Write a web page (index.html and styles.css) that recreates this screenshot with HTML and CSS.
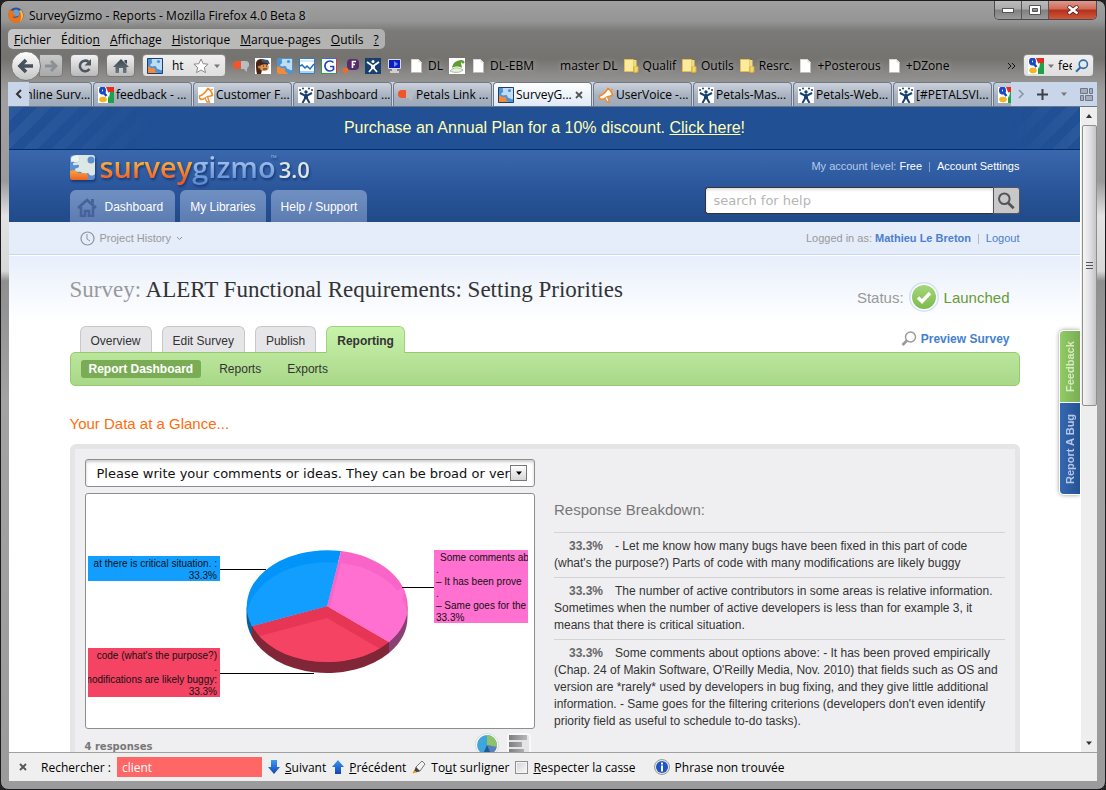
FILE: index.html
```html
<!DOCTYPE html>
<html lang="fr">
<head>
    <meta charset="utf-8">
    <title>SurveyGizmo - Reports</title>
    <link rel="stylesheet" href="styles.css">
</head>
<body>

<!-- Shared icons -->
<svg class="defs" width="0" height="0" aria-hidden="true">
    <defs>
        <linearGradient id="steel" x1="0" y1="0" x2="0" y2="1"><stop offset="0" stop-color="#3c4650"/><stop offset="1" stop-color="#6d7780"/></linearGradient>
        <linearGradient id="arrowBlue" x1="0" y1="0" x2="0" y2="1"><stop offset="0" stop-color="#3a9cf5"/><stop offset="1" stop-color="#1543b5"/></linearGradient>
        <linearGradient id="greenBall" x1="0" y1="0" x2="0" y2="1"><stop offset="0" stop-color="#a5d67a"/><stop offset="1" stop-color="#7cbb4c"/></linearGradient>
        <linearGradient id="orangeFill" x1="0" y1="0" x2="0" y2="1"><stop offset="0" stop-color="#fba33c"/><stop offset="1" stop-color="#ef6224"/></linearGradient>
        <linearGradient id="bars"><stop offset="0" stop-color="#7e7e80"/><stop offset="1" stop-color="#b8b8ba"/></linearGradient>
    </defs>
    <symbol id="i-page" viewBox="0 0 16 16">
        <path d="M2.5 1.5h7l3 3v10h-10z" fill="#fff" stroke="#d8d8d8"/>
        <path d="M9.500 1.500v3h3z" fill="#ddd"/>
        <path d="M12.500 5v9.500h-10" fill="none" stroke="#bbb"/>
    </symbol>
    <symbol id="i-folder" viewBox="0 0 16 16">
        <path d="M.5 1.500h9v12h-9z" fill="#fbeaa0" stroke="#e3bf4a"/>
        <path d="M10 8.500h4v5.500l-4 .5z" fill="#f2d873" stroke="#d4ae3b"/>
        <path d="M9.500 2h3v6.500h-3z" fill="#f3dc80"/>
    </symbol>
    <symbol id="i-google" viewBox="0 0 16 16">
        <path d="M0 0h16v16H0z" fill="#fff"/>
        <path d="M8 0h8v5H10z" fill="#e52c1f"/>
        <path d="M10 5h6v11h-6z" fill="#1fa04b"/>
        <path d="M0 6l6 1 2 5-3 4H0z" fill="#fff"/>
        <ellipse cx="4.500" cy="3.500" rx="2" ry="2.500" fill="#fff" stroke="#1b49c4" stroke-width="3"/>
        <path d="M6 6l2.500 3" stroke="#1b49c4" stroke-width="2.500"/>
        <ellipse cx="5" cy="12.500" rx="3.400" ry="2.400" fill="#f6b51b" stroke="#f6b51b"/>
        <path d="M9 6l2 5 1-6z" fill="#fff"/>
    </symbol>
    <symbol id="i-puzzle" viewBox="0 0 16 16">
        <rect width="16" height="16" rx="2" fill="#4f94d2"/>
        <path d="M5 1h10v11c-2 1-2-1-4-1s-1-3-3-3-2 1-4 0 0-2 1-3-1-2 0-4z" fill="#bfdcf3"/>
        <circle cx="11.500" cy="3.500" r="1.600" fill="#4f94d2"/>
        <path d="M0 9c2-1 3 0 4 1s3-1 4 1-1 2 1 3 2 2 2 2H2a2 2 0 0 1-2-2z" fill="#f5893a"/>
    </symbol>
    <symbol id="i-jira" viewBox="0 0 16 16">
        <rect width="16" height="16" fill="#fff"/>
        <g fill="#17406f">
            <circle cx="8" cy="5" r="1.700"/><circle cx="2" cy="3" r="1"/><circle cx="5" cy="1.500" r="1"/><circle cx="11" cy="1.500" r="1"/><circle cx="14" cy="3" r="1"/>
        </g>
        <path d="M2 6l5 2.500v3L4.500 16M14 6L9 8.500v3l2.500 4.500M8 7v5" fill="none" stroke="#17406f" stroke-width="2"/>
    </symbol>
    <symbol id="i-bubbles" viewBox="0 0 16 16">
        <path d="M8 3h4.500a3.500 3.500 0 0 1 2 6.500L13.500 14 11 11H8z" fill="#b9bcc2"/>
        <path d="M8 3v8H4a4 4 0 0 1 0-8z" fill="#f0562a"/>
    </symbol>
    <symbol id="i-horn" viewBox="0 0 16 16">
        <path d="M1.500 9C4 8.500 7 6 10 1.500c2 1 4 4 4.500 7C11 9 8 10 5.500 12 3 13 1 12 1.500 9z" fill="#fff" stroke="#f08a2c" stroke-width="1.600"/>
        <path d="M7 11l2 4h2.500L9.500 10" fill="#fff" stroke="#f08a2c" stroke-width="1.300"/>
        <path d="M13 3l2-1" stroke="#f08a2c"/>
    </symbol>
    <symbol id="i-lens" viewBox="0 0 16 16">
        <circle cx="6.500" cy="6" r="4.700" fill="none" stroke="currentColor" stroke-width="1.800"/>
        <path d="M9.800 9.500l5 5" stroke="currentColor" stroke-width="2.400"/>
    </symbol>
    <symbol id="i-caret" viewBox="0 0 8 8"><path d="M1 2.500h6L4 6z" fill="currentColor"/></symbol>
</svg>

<div class="window">

    <div class="title-bar">
        <svg class="fox" viewBox="0 0 16 16">
            <circle cx="8" cy="8" r="7.500" fill="#2b4f9c"/>
            <circle cx="8" cy="6" r="3.500" fill="#5ea2df"/>
            <path d="M1 2c1 1 2 1.500 3 1.500 1 .5 2 .5 3 1-1 1-2 1-2 2 1 1 2 1 3 2-1 2-3 1-4 1 2 2 6 1.500 7-1 1-2 0-4-1-5 3 1 5 3 5.500 5C15 13 11.500 16 8 16 3 16 0 12 .3 7.500z" fill="#e8731c"/>
            <path d="M13 3c3 3 2.500 9-1 11.500C14 10 13.500 6 11 4z" fill="#f9c02f"/>
        </svg>
        <span class="window-title">SurveyGizmo - Reports - Mozilla Firefox 4.0 Beta 8</span>
        <div class="window-buttons">
            <button class="wb-min" aria-label="Réduire"><svg width="14" height="8" viewBox="0 0 14 8"><rect x="1.500" y="2.500" width="11" height="4" fill="#fff" stroke="#555"/></svg></button>
            <button class="wb-max" aria-label="Agrandir"><svg width="12" height="10" viewBox="0 0 12 10"><path d="M.5.5h11v9H.5z M3.500 3.500h5v3h-5z" fill="#fff" fill-rule="evenodd" stroke="#555"/></svg></button>
            <button class="wb-close" aria-label="Fermer"><svg width="12" height="10" viewBox="0 0 12 10"><path d="M1 1l10 8M11 1L1 9" stroke="#60221c" stroke-width="4"/><path d="M1.500 1.500l9 7M10.500 1.500l-9 7" stroke="#fff" stroke-width="2.400"/></svg></button>
        </div>
    </div>

    <nav class="menu-bar">
        <button><u>F</u>ichier</button>
        <button>Éditio<u>n</u></button>
        <button><u>A</u>ffichage</button>
        <button><u>H</u>istorique</button>
        <button><u>M</u>arque-pages</button>
        <button><u>O</u>utils</button>
        <button><u>?</u></button>
    </nav>

    <div class="nav-bar">
        <div class="back-forward">
            <button class="back" aria-label="Précédent"><svg width="18" height="16" viewBox="0 0 18 16"><path d="M9 2L3 8l6 6M3 8h13" fill="none" stroke="#47515b" stroke-width="3.600"/></svg></button>
            <button class="forward" aria-label="Suivant"><svg width="14" height="14" viewBox="0 0 14 14"><path d="M7 2l5 5-5 5M12 7H1" fill="none" stroke="#8b9096" stroke-width="3"/></svg></button>
        </div>
        <button class="tool" aria-label="Actualiser"><svg width="16" height="16" viewBox="0 0 16 16"><path d="M12.500 11A5.300 5.300 0 1 1 11.500 3.800" fill="none" stroke="#4d5761" stroke-width="2.600"/><path d="M14 1v6.500H7.500z" fill="#4d5761"/></svg></button>
        <button class="tool" aria-label="Accueil"><svg width="18" height="16" viewBox="0 0 18 16"><path d="M9 1L1 9h2.500v6H7v-5h4v5h3.500V9H17z" fill="url(#steel)"/><path d="M12.500 2H15v4l-2.500-2z" fill="#3c4650"/></svg></button>
        <div class="url-box">
            <svg class="fav" viewBox="0 0 16 16"><use href="#i-puzzle"/><path d="M.5.5h15v15H.5z" fill="none" stroke="#1d3f6b"/></svg>
            <input type="text" value="ht" aria-label="Adresse">
            <svg width="16" height="16" viewBox="0 0 16 16"><path d="M8 1l2.100 4.700 5 .5-3.800 3.400 1.200 5L8 12l-4.500 2.600 1.200-5L.9 6.200l5-.5z" fill="#fff" stroke="#8a8a8a"/></svg>
            <svg class="caret" viewBox="0 0 8 8"><use href="#i-caret"/></svg>
        </div>
        <div class="bookmarks">
            <a href="#" aria-label="Petals"><svg viewBox="0 0 16 16"><use href="#i-bubbles"/></svg></a>
            <a href="#" aria-label="MailChimp"><svg viewBox="0 0 16 16"><rect width="16" height="16" fill="#fff"/><path d="M1 6c0-4 3-5 6-5l7 3-1 3-5 1-2 8H2c-1-3-1-7-1-10z" fill="#4a2412"/><path d="M6 7c3-1 5-1 7 0 2 3 0 6-4 6s-5-3-3-6z" fill="#dc9658"/><path d="M6 1l7 1 2 4-8-2z" fill="#38597f"/><circle cx="4.500" cy="9" r="1.600" fill="#c6844c"/><path d="M8 8h1M11 8h1M8 11h4" stroke="#3a2014"/></svg></a>
            <a href="#" aria-label="SurveyGizmo"><svg viewBox="0 0 16 16"><use href="#i-puzzle"/></svg></a>
            <a href="#" aria-label="Statistiques"><svg viewBox="0 0 16 16"><path d="M.5.5h15v15H.5z" fill="#fff" stroke="#2f7fc4"/><path d="M1 3h14" stroke="#a9d3f0"/><path d="M1 14h14" stroke="#a9d3f0" stroke-width="2"/><path d="M1 8l2-1 3 3 2-2 3 3 4-5" fill="none" stroke="#1e6fb8" stroke-width="1.500"/></svg></a>
            <a href="#" aria-label="Google"><svg viewBox="0 0 16 16"><rect width="16" height="16" fill="#fff"/><path d="M0 0h16v1H0z" fill="#3a6be0"/><path d="M15 0h1v16h-1z" fill="#d33"/><path d="M0 15h16v1H0z" fill="#2da14a"/><path d="M0 0h1v16H0z" fill="#2da14a"/><path d="M12.500 4.500A5 5 0 1 0 12.500 11.500V8.500H9" fill="none" stroke="#2344b8" stroke-width="1.700"/></svg></a>
            <a href="#" aria-label="Flux"><svg viewBox="0 0 16 16"><rect x="4" y="1" width="12" height="11" rx="4" fill="#5b2a6e"/><path d="M13 3.500H9.500V10M9 6.500h3" fill="none" stroke="#fff" stroke-width="1.600"/><path d="M0 10h5v3l-2 3-3-2z" fill="#ef6b2c"/></svg></a>
            <a href="#" aria-label="Jira"><svg viewBox="0 0 16 16"><rect width="16" height="16" fill="#17406f"/><path d="M2 4l5 3.500v3L4 14M14 4L9 7.500v3l3 3.500M8 7v4" fill="none" stroke="#fff" stroke-width="1.800"/><circle cx="8" cy="3.500" r="1.500" fill="#fff"/></svg></a>
            <a href="#" aria-label="Bureau"><svg viewBox="0 0 16 16"><path d="M1.500 1.500h12v9h-12z" fill="#0b1fc4" stroke="#dcdcdc"/><path d="M7 3l4 3-4 3z" fill="#6f8dff"/><path d="M5 11h5v2H5zM3 13h9v2H3z" fill="#d0d0d0"/></svg></a>
            <a href="#"><svg viewBox="0 0 16 16"><use href="#i-page"/></svg>DL</a>
            <a href="#" aria-label="Lutin"><svg viewBox="0 0 16 16"><rect width="16" height="16" fill="#fff"/><path d="M3 10C4 4 8 2 14 2l-2 3 1 5c-3-2-7-2-10 0z" fill="#5f9c33"/><path d="M1 13c4-4 8-4 13-1-3 3-9 3-13 1z" fill="#e8efe2" stroke="#a8bf98"/><circle cx="14" cy="4" r="1.500" fill="#5f9c33"/></svg></a>
            <a href="#"><svg viewBox="0 0 16 16"><use href="#i-page"/></svg>DL-EBM</a>
            <a href="#" class="no-icon">master DL</a>
            <a href="#"><svg viewBox="0 0 16 16"><use href="#i-folder"/></svg>Qualif</a>
            <a href="#"><svg viewBox="0 0 16 16"><use href="#i-folder"/></svg>Outils</a>
            <a href="#"><svg viewBox="0 0 16 16"><use href="#i-folder"/></svg>Resrc.</a>
            <a href="#"><svg viewBox="0 0 16 16"><use href="#i-page"/></svg>+Posterous</a>
            <a href="#"><svg viewBox="0 0 16 16"><use href="#i-page"/></svg>+DZone</a>
        </div>
        <button class="overflow" aria-label="Plus de marque-pages"><svg width="9" height="8" viewBox="0 0 9 8"><path d="M1 1l3 3-3 3M5 1l3 3-3 3" fill="none" stroke="#111"/></svg></button>
        <div class="search-box">
            <svg class="fav" viewBox="0 0 16 16"><use href="#i-google"/></svg>
            <svg class="caret" viewBox="0 0 8 8"><use href="#i-caret"/></svg>
            <input type="text" value="fee" aria-label="Recherche">
            <svg class="lens" viewBox="0 0 16 16"><use href="#i-lens"/></svg>
        </div>
    </div>

    <div class="tab-bar">
        <button class="tab-scroll" aria-label="Onglets précédents"><svg width="7" height="10" viewBox="0 0 7 10"><path d="M6 1L2 5l4 4" fill="none" stroke="#333" stroke-width="2"/></svg></button>
        <div class="tabs">
            <button class="tab"><i class="fav"></i><span>Online Surv...</span></button>
            <button class="tab"><svg class="fav" viewBox="0 0 16 16"><use href="#i-google"/></svg><span>feedback - ...</span></button>
            <button class="tab"><svg class="fav white" viewBox="0 0 16 16"><use href="#i-horn"/></svg><span>Customer F...</span></button>
            <button class="tab"><svg class="fav" viewBox="0 0 16 16"><use href="#i-jira"/></svg><span>Dashboard ...</span></button>
            <button class="tab"><svg class="fav" viewBox="0 0 16 16"><use href="#i-bubbles"/></svg><span>Petals Link ...</span></button>
            <button class="tab active"><svg class="fav" viewBox="0 0 16 16"><use href="#i-puzzle"/><path d="M.5.5h15v15H.5z" fill="none" stroke="#1d3f6b"/></svg><span>SurveyG...</span><svg class="close" viewBox="0 0 8 8"><path d="M1 1l6 6M7 1L1 7" stroke="#555" stroke-width="1.800"/></svg></button>
            <button class="tab"><svg class="fav" viewBox="0 0 16 16"><use href="#i-horn"/></svg><span>UserVoice -...</span></button>
            <button class="tab"><svg class="fav" viewBox="0 0 16 16"><use href="#i-jira"/></svg><span>Petals-Mas...</span></button>
            <button class="tab"><svg class="fav" viewBox="0 0 16 16"><use href="#i-jira"/></svg><span>Petals-Web...</span></button>
            <button class="tab"><svg class="fav" viewBox="0 0 16 16"><use href="#i-jira"/></svg><span>[#PETALSVI...</span></button>
            <button class="tab" aria-label="Google"><svg class="fav" viewBox="0 0 16 16"><use href="#i-google"/></svg></button>
        </div>
        <div class="tab-tools">
            <button aria-label="Onglets suivants"><svg width="7" height="10" viewBox="0 0 7 10"><path d="M1 1l4 4-4 4" fill="none" stroke="#8a93a3" stroke-width="1.600"/></svg></button>
            <button aria-label="Nouvel onglet"><svg width="11" height="11" viewBox="0 0 11 11"><path d="M5.500 0v11M0 5.500h11" stroke="#3c4048" stroke-width="2"/></svg></button>
            <button aria-label="Liste des onglets"><svg class="caret" viewBox="0 0 8 8"><use href="#i-caret"/></svg></button>
            <button aria-label="Groupes d'onglets"><svg width="13" height="13" viewBox="0 0 13 13"><path d="M.5.5h7v5h-7zM9.500.5h3v5h-3zM.5 7.500h3v5h-3zM5.500 7.500h7v5h-7z" fill="#a5adbb" stroke="#6e7786"/></svg></button>
        </div>
    </div>

    <div class="viewport">
        <div class="page">
            <div class="promo">Purchase an Annual Plan for a 10% discount. <a href="#">Click here</a>!</div>

            <header class="site-header">
                <div class="wrap header-inner">
                    <div class="brand">
                        <div class="logo">
                            <svg width="26" height="28" viewBox="0 0 26 28">
                                <rect x="0" y="1" width="25" height="25" rx="3" fill="#5f8fd0"/>
                                <path d="M10 1h12a3 3 0 0 1 3 3v16c-2 2-5 2-6 0s-4-1-3 2-2 3-4 1 2-4-1-5-6 1-6-2 4-1 4-4-6 1-6-2 5 0 6-3-1-4 0-6z" fill="#dce8e6"/>
                                <path d="M1 5c0-3 3-4 8-4-1 3 2 5-1 7-3 1-4-1-7 0z" fill="#edf3ef"/>
                                <circle cx="21" cy="6" r="3.500" fill="#5f8fd0"/>
                                <path d="M0 17c4-1 6-1 7 1s4 1 6 1 5 0 5 3-1 4-1 4H3a3 3 0 0 1-3-3z" fill="url(#orangeFill)"/>
                            </svg>
                            <span class="logo-survey">survey</span><span class="logo-gizmo">gizmo</span><sup>™</sup><span class="logo-version">3.0</span>
                        </div>
                        <nav class="site-nav">
                            <a href="#" class="home"><svg width="20" height="19" viewBox="0 0 20 19"><path d="M1 10l9-8 9 8M4 9v9h4v-5h4v5h4V9" fill="none" stroke="#45629a" stroke-width="2.600"/><path d="M14 1h3v5l-3-2z" fill="#45629a"/></svg>Dashboard</a>
                            <a href="#">My Libraries</a>
                            <a href="#">Help / Support</a>
                        </nav>
                    </div>
                    <div class="header-right">
                        <div class="account">My account level: <b>Free</b><i>|</i><a href="#">Account Settings</a></div>
                        <form class="help-search">
                            <input type="text" placeholder="search for help" aria-label="search for help">
                            <button type="button" aria-label="Search"><svg width="18" height="18" viewBox="0 0 16 16"><use href="#i-lens"/></svg></button>
                        </form>
                    </div>
                </div>
            </header>

            <div class="sub-bar">
                <div class="wrap sub-inner">
                    <button class="history">
                        <svg width="15" height="15" viewBox="0 0 15 15"><circle cx="7.500" cy="7.500" r="6.500" fill="none" stroke="#8f949d" stroke-width="1.200"/><path d="M7 3v5l3 2" fill="none" stroke="#8f949d"/></svg>
                        Project History
                        <svg width="7" height="5" viewBox="0 0 7 5"><path d="M1 1l2.500 2.500L6 1" fill="none" stroke="#8f949d"/></svg>
                    </button>
                    <div class="login">Logged in as: <a href="#"><b>Mathieu Le Breton</b></a><i>|</i><a href="#">Logout</a></div>
                </div>
            </div>

            <main class="main">
                <div class="wrap">
                    <div class="title-row">
                        <h1><span>Survey:</span> ALERT Functional Requirements: Setting Priorities</h1>
                        <div class="status">Status:
                            <svg width="32" height="32" viewBox="0 0 32 32"><circle cx="16" cy="16" r="15" fill="#d3e1f8"/><circle cx="16" cy="16" r="13.500" fill="#fff"/><circle cx="16" cy="16" r="12" fill="url(#greenBall)"/><path d="M10 16.500l4 4 8-8.500" fill="none" stroke="#fff" stroke-width="3.400"/></svg>
                            <strong>Launched</strong>
                        </div>
                    </div>

                    <div class="tabs-row">
                        <nav class="survey-tabs">
                            <a href="#">Overview</a>
                            <a href="#">Edit Survey</a>
                            <a href="#">Publish</a>
                            <a href="#" class="current">Reporting</a>
                        </nav>
                        <a href="#" class="preview"><svg width="16" height="16" viewBox="0 0 16 16"><circle cx="9.500" cy="6" r="5" fill="none" stroke="#999" stroke-width="1.400"/><path d="M6 9.500L1.500 14" stroke="#999" stroke-width="2.600"/></svg>Preview Survey</a>
                    </div>
                    <nav class="report-nav">
                        <a href="#" class="current">Report Dashboard</a>
                        <a href="#">Reports</a>
                        <a href="#">Exports</a>
                    </nav>

                    <h2>Your Data at a Glance...</h2>

                    <section class="panel">
                        <div class="chart-col">
                            <div class="question">
                                <select aria-label="Question">
                                    <option>Please write your comments or ideas. They can be broad or very specific.</option>
                                </select>
                                <span class="select-arrow"><svg width="8" height="8" viewBox="0 0 8 8"><use href="#i-caret"/></svg></span>
                            </div>
                            <div class="chart">
                                <svg width="448" height="234" viewBox="0 0 448 234">
                                    <defs>
                                        <path id="blue" d="M241 112L166 132A80.500 56 0 0 1 255 57z"/>
                                        <path id="pink" d="M241 112L255 57A80.500 56 0 0 1 303 148z"/>
                                        <path id="red" d="M241 112L303 148A80.500 56 0 0 1 166 132z"/>
                                        <clipPath id="inBlue"><use href="#blue"/></clipPath>
                                        <clipPath id="inPink"><use href="#pink"/></clipPath>
                                        <clipPath id="inRed"><use href="#red"/></clipPath>
                                        <clipPath id="leftLabels"><rect x="2" y="0" width="132" height="234"/></clipPath>
                                        <clipPath id="rightLabels"><rect x="348" y="0" width="94" height="234"/></clipPath>
                                    </defs>

                                    <!-- Pie sides -->
                                    <path d="M160.500 112v11A80.500 56 0 0 0 166 143V132z" fill="#0b5f93"/>
                                    <path d="M166 132v11A80.500 56 0 0 0 303 159V148z" fill="#802637"/>
                                    <path d="M303 148v11A80.500 56 0 0 0 321.500 123V112z" fill="#8a4073"/>

                                    <!-- Pie top -->
                                    <use href="#blue" fill="#0294f8"/>
                                    <use href="#pink" fill="#f864c8"/>
                                    <use href="#red" fill="#e73556"/>
                                    <g clip-path="url(#inBlue)"><use href="#blue" y="12" fill="#129eff"/><path d="M166 132l75-20v12z" fill="#129eff"/></g>
                                    <g clip-path="url(#inPink)"><use href="#pink" y="12" fill="#ff70d0"/><path d="M244 114l76-20-17 54z" fill="#ff70d0"/></g>
                                    <g clip-path="url(#inRed)"><use href="#red" y="12" fill="#f54364"/></g>

                                    <path d="M134 75.500h46M316 93.500h32M134 179.500h94" stroke="#000"/>

                                    <rect x="2" y="62" width="132" height="25" fill="#129eff"/>
                                    <rect x="2" y="154" width="132" height="49" fill="#f54364"/>
                                    <rect x="348" y="56" width="94" height="73" fill="#ff70d0"/>
                                    <g class="chart-text end" clip-path="url(#leftLabels)">
                                        <text x="131" y="73">at there is critical situation. :</text>
                                        <text x="131" y="85">33.3%</text>
                                        <text x="131" y="165">code (what's the purpose?)</text>
                                        <text x="131" y="177">.</text>
                                        <text x="131" y="189">modifications are likely buggy:</text>
                                        <text x="131" y="201">33.3%</text>
                                    </g>
                                    <g class="chart-text" clip-path="url(#rightLabels)">
                                        <text x="354" y="67">Some comments ab</text>
                                        <text x="350" y="79">.</text>
                                        <text x="350" y="91">– It has been prove</text>
                                        <text x="350" y="103">.</text>
                                        <text x="350" y="115">– Same goes for the</text>
                                        <text x="350" y="127">33.3%</text>
                                    </g>
                                </svg>
                            </div>
                            <div class="chart-foot">
                                <span>4 responses</span>
                                <div class="chart-types">
                                    <button aria-label="Pie chart"><svg width="24" height="24" viewBox="0 0 24 24"><circle cx="12" cy="12" r="11.500" fill="#fff" stroke="#d5d7dc"/><circle cx="12" cy="12" r="10" fill="#41a5dd"/><path d="M12 12V2a10 10 0 0 1 9.700 12z" fill="#8cc269"/><path d="M12 12l9.700 2A10 10 0 0 1 16 21z" fill="#5c7fb8"/><path d="M12 12l4 9a10 10 0 0 1-8 0z" fill="#1c5a9c"/></svg></button>
                                    <button aria-label="Bar chart"><svg width="24" height="24" viewBox="0 0 24 24"><rect x="1" y="1" width="22" height="22" rx="3" fill="#e4e4e6" stroke="#f8f8f8" stroke-width="2"/><path d="M2 2h18v5H2zM2 9h13v5H2zM2 16h15v5H2z" fill="url(#bars)"/></svg></button>
                                </div>
                            </div>
                        </div>

                        <div class="breakdown">
                            <h3>Response Breakdown:</h3>
                            <ul>
                                <li><b>33.3%</b>- Let me know how many bugs have been fixed in this part of code (what's the purpose?) Parts of code with many modifications are likely buggy</li>
                                <li><b>33.3%</b>The number of active contributors in some areas is relative information. Sometimes when the number of active developers is less than for example 3, it means that there is critical situation.</li>
                                <li><b>33.3%</b>Some comments about options above: - It has been proved empirically (Chap. 24 of Makin Software, O'Reilly Media, Nov. 2010) that fields such as OS and version are *rarely* used by developers in bug fixing, and they give little additional information. - Same goes for the filtering criterions (developers don't even identify priority field as useful to schedule to-do tasks).</li>
                            </ul>
                        </div>
                    </section>
                </div>
            </main>

            <div class="side-tabs">
                <button class="feedback">Feedback</button>
                <button class="bug">Report A Bug</button>
            </div>
        </div>

        <div class="scrollbar">
            <svg width="8" height="8" viewBox="0 0 8 8"><path d="M1 6h6L4 2z" fill="#333"/></svg>
            <div class="thumb"><i></i><i></i><i></i></div>
            <svg class="down" width="8" height="8" viewBox="0 0 8 8"><use href="#i-caret"/></svg>
        </div>
    </div>

    <div class="find-bar">
        <button class="find-close" aria-label="Fermer"><svg width="8" height="8" viewBox="0 0 8 8"><path d="M1 1l6 6M7 1L1 7" stroke="#555" stroke-width="1.800"/></svg></button>
        <label for="find">Rechercher :</label>
        <input type="text" id="find" value="client">
        <button><svg width="12" height="14" viewBox="0 0 12 14"><path d="M3 0h6v7h3l-6 7-6-7h3z" fill="url(#arrowBlue)"/></svg><span><u>S</u>uivant</span></button>
        <button><svg width="12" height="14" viewBox="0 0 12 14"><path d="M3 14h6V7h3L6 0 0 7h3z" fill="url(#arrowBlue)"/></svg><span><u>P</u>récédent</span></button>
        <button><svg width="14" height="14" viewBox="0 0 14 14"><path d="M4 7l6-6 3 3-5 7-4 1z" fill="#f2f2f2" stroke="#777"/><path d="M4 7l-2 4 2 1 4-1z" fill="#444"/><path d="M2 11l-1 2 3-1z" fill="#f0a020" stroke="#f0a020"/></svg><span>To<u>u</u>t surligner</span></button>
        <label class="match-case"><input type="checkbox"><span><u>R</u>especter la casse</span></label>
        <div class="find-status"><svg width="16" height="16" viewBox="0 0 16 16"><circle cx="8" cy="8" r="7.500" fill="#e8e8e8" stroke="#999"/><circle cx="8" cy="8" r="6" fill="#1f55c0"/><path d="M8 3.500v2M8 6.500v6" stroke="#fff" stroke-width="2"/></svg>Phrase non trouvée</div>
    </div>
</div>

</body>
</html>
```

FILE: styles.css
```css
* { margin: 0; padding: 0; box-sizing: border-box; }

body {
    height: 100vh;
    overflow: hidden;
    background: #222;
    font-family: Arial, "Liberation Sans", sans-serif;
    font-size: 12px;
    color: #333;
}

a { color: inherit; text-decoration: none; }

button {
    background: none;
    border: none;
    font: inherit;
    color: inherit;
    cursor: pointer;
}

svg { display: block; flex: none; }

.defs { position: absolute; }

/* Browser window */
.window {
    height: 100vh;
    display: flex;
    flex-direction: column;
    padding: 0 8px 8px;
    border: 1px solid #1c1c20;
    border-radius: 8px;
    overflow: hidden;
    background:
        linear-gradient(#a0a0a0 0, #959595 20px, #7b7a78 30px, #757370 58px, #8c8b8a 74px, #9d9d9d 90px, transparent 110px),
        linear-gradient(#a0a0a0 110px, #9a9a9a 180px, #e2e2e2 215px, #d8d8d8 270px, #8f8f8f 280px, #a3a3a3 400px, #9b9b9b);
    font-family: "Segoe UI", "Open Sans", sans-serif;
    color: #000;
}

.title-bar {
    height: 28px;
    display: flex;
    align-items: center;
    flex: none;
}

.fox { width: 16px; height: 16px; margin-left: -1px; }

.window-title {
    flex: 1;
    padding-left: 5px;
    text-shadow: 0 0 6px #ccc;
}

.window-buttons {
    display: flex;
    align-self: flex-start;
    height: 19px;
    border: 1px solid #4b4b4b;
    border-top: none;
    border-radius: 0 0 5px 5px;
    overflow: hidden;
}

.window-buttons button {
    display: flex;
    align-items: center;
    justify-content: center;
    width: 27px;
    border-right: 1px solid #555;
    background: linear-gradient(#bcbcbc, #a9a9a9 45%, #808080 50%, #9a9a9a);
}

.window-buttons .wb-close {
    width: 47px;
    border-right: none;
    background: linear-gradient(#dc9a8c, #cf6a58 45%, #b3301c 50%, #d0583a);
}

.menu-bar {
    display: flex;
    align-self: flex-start;
    align-items: center;
    flex: none;
    height: 20px;
    gap: 10px;
    padding: 0 6px;
    margin-left: -1px;
    border-radius: 5px;
    background: linear-gradient(90deg, #c6c6c6, #b0b0af);
}

/* Navigation bar */
.nav-bar {
    display: flex;
    align-items: center;
    flex: none;
    height: 33px;
    gap: 7px;
    padding: 0 3px 0 2px;
}

.back-forward { display: flex; align-items: center; }

.back,
.forward,
.tool {
    display: flex;
    align-items: center;
    justify-content: center;
    border: 1px solid #77797b;
    background: linear-gradient(#f2f2f2, #b9b9b9);
}

.back {
    width: 30px;
    height: 30px;
    border-radius: 50%;
    background: linear-gradient(#fff, #c4c4c4);
    position: relative;
}

.forward {
    width: 24px;
    height: 23px;
    margin-left: -2px;
    border-radius: 0 4px 4px 0;
    background: linear-gradient(#c9c9c9, #a8a8a8);
}

.tool {
    width: 29px;
    height: 23px;
    border-radius: 4px;
}

.url-box,
.search-box {
    display: flex;
    align-items: center;
    height: 23px;
    gap: 4px;
    padding: 0 4px;
    border: 1px solid #8a8a8a;
    border-radius: 4px;
    background: linear-gradient(#f0f0f0, #dedede);
}

.url-box { width: 84px; }
.search-box { width: 71px; gap: 3px; }

.url-box input,
.search-box input {
    flex: 1;
    min-width: 0;
    border: none;
    background: none;
    font: inherit;
}

.url-box input { padding-left: 5px; }

.fav { width: 16px; height: 16px; flex: none; }
.white { background: #fff; }
.caret { width: 8px; height: 8px; color: #777; }
.lens { width: 14px; height: 14px; color: #2f6fae; transform: scaleX(-1); }

.bookmarks {
    display: flex;
    flex: 1;
    min-width: 0;
    gap: 6px;
    overflow: hidden;
}

.bookmarks a {
    display: flex;
    align-items: center;
    flex: none;
    gap: 3px;
    white-space: nowrap;
    text-shadow: 0 0 5px #bbb;
}

.bookmarks svg { width: 16px; height: 16px; }
.bookmarks .no-icon { padding-left: 20px; }

/* Tab bar */
.tab-bar {
    display: flex;
    flex: none;
    height: 24px;
    margin: 0 0 0 -1px;
    background: #c9d5e8;
}

.tab-scroll {
    width: 21px;
    display: flex;
    align-items: center;
    justify-content: center;
}

.tabs {
    display: flex;
    flex: 1;
    min-width: 0;
    gap: 1px;
    overflow: hidden;
}

.tab {
    display: flex;
    align-items: center;
    flex: 0 0 99px;
    gap: 2px;
    padding-left: 4px;
    border: 1px solid #6f7885;
    border-bottom: none;
    border-radius: 4px 4px 0 0;
    background: linear-gradient(#ccd2dc, #a9b2c0 55%, #9daabb);
    white-space: nowrap;
    overflow: hidden;
}

.tab:first-child { margin-left: -36px; }

.tab.active { background: linear-gradient(#fff, #eef4fb 50%, #dfe9f6); }

.close { width: 8px; height: 8px; margin: 0 8px 0 auto; }

.tab-tools {
    display: flex;
    align-items: center;
    gap: 12px;
    padding: 0 4px 0 7px;
}

/* Viewport */
.viewport {
    display: flex;
    flex: 1;
    min-height: 0;
    border-top: 1px solid #6c7684;
}

.page {
    flex: 1;
    min-width: 0;
    overflow: hidden;
    position: relative;
    background: #fff;
    font-family: Arial, "Liberation Sans", sans-serif;
    color: #333;
}

.wrap {
    width: 89%;
    max-width: 950px;
    margin: 0 auto;
}

.promo {
    position: relative;
    height: 43px;
    border-bottom: 1px solid #002f6c;
    background: #215095;
    color: #ffffb3;
    font-size: 16px;
    line-height: 42px;
    text-align: center;
}

.promo a { text-decoration: underline; }

/* Diagonal stripes that fade towards the middle */
.promo::before,
.promo::after {
    content: "";
    position: absolute;
    top: 0;
    bottom: 0;
    width: 150px;
    background: repeating-linear-gradient(135deg, #2b599c 0 10px, #215095 10px 20px);
}

.promo::before { left: 0; mask-image: linear-gradient(90deg, #000, transparent); }
.promo::after { right: 0; width: 70px; mask-image: linear-gradient(270deg, #000, transparent); }

.site-header {
    height: 72px;
    background: linear-gradient(#3a67ad, #2a559a 55%, #204a88);
}

.header-inner {
    display: flex;
    justify-content: space-between;
    height: 100%;
}

.brand {
    display: flex;
    flex-direction: column;
    justify-content: space-between;
}

.logo {
    display: flex;
    align-items: flex-start;
    height: 36px;
    padding-top: 4px;
    font-family: "Open Sans", sans-serif;
    font-size: 29px;
    font-weight: 600;
    line-height: 26px;
    filter: drop-shadow(1px 2px 1px #173b75);
}

.logo-survey,
.logo-gizmo {
    height: 36px;
    background: linear-gradient(#fbb03b 8px, #f15a24 26px);
    -webkit-background-clip: text;
    background-clip: text;
    color: transparent;
}

.logo-survey { padding-left: 4px; }

.logo-gizmo {
    background-image: linear-gradient(#a9c5f0 4px, #5d8cd2 28px);
}

.logo sup {
    width: 0;
    font-size: 8px;
    line-height: 8px;
    color: #8fb0e4;
    overflow: visible;
    position: relative;
    left: -5px;
}

.logo-version {
    padding-left: 3px;
    font-size: 22px;
    line-height: 30px;
    color: #dfe5e3;
}

.site-nav { display: flex; gap: 5px; }

.site-nav a {
    display: flex;
    align-items: center;
    height: 32px;
    padding: 2px 10px 0;
    border-radius: 6px 6px 0 0;
    background: linear-gradient(#7190c2, #5c7bb0);
    color: #fff;
}

.site-nav .home { gap: 8px; padding: 2px 12px 0 7px; }

.header-right {
    display: flex;
    flex-direction: column;
    align-items: flex-end;
    gap: 13px;
    padding-top: 8px;
    color: #b6cbec;
}

.account,
.login { font-size: 11px; line-height: 16px; }

.account b,
.account a { color: #fff; font-weight: normal; }

.account i,
.login i { margin: 0 6px; font-style: normal; opacity: .7; }

.help-search { display: flex; height: 27px; }

.help-search input {
    width: 288px;
    padding: 0 8px;
    border: 1px solid #333;
    border-right: none;
    border-radius: 3px 0 0 3px;
    background: #fff;
    box-shadow: inset 0 2px 3px #ddd;
    font-family: Verdana, "DejaVu Sans", sans-serif;
    font-size: 13px;
}

.help-search input::placeholder { color: #b5b5b5; }

.help-search button {
    width: 27px;
    display: flex;
    align-items: center;
    justify-content: center;
    border: 1px solid #555;
    border-radius: 0 3px 3px 0;
    background: #c8c8ca;
    color: #555;
}

.sub-bar {
    height: 33px;
    border-bottom: 1px solid #c9d8f2;
    background: #e5ecfa;
    color: #999;
    font-size: 11px;
}

.sub-inner {
    display: flex;
    align-items: center;
    justify-content: space-between;
    height: 32px;
}

.history {
    display: flex;
    align-items: center;
    gap: 5px;
    padding-left: 10px;
    color: #999;
}

.login a { color: #4a80cd; }

/* Main content */
.main {
    border-top: 1px solid #fff;
    background: linear-gradient(#e8effb, #fff 66px);
}

.title-row {
    display: flex;
    align-items: flex-start;
    justify-content: space-between;
    padding: 21px 10px 9px 0;
}

h1 {
    font-family: Georgia, "Liberation Serif", serif;
    font-size: 23px;
    font-weight: normal;
    line-height: 26px;
    color: #333;
}

h1 span { color: #999; }

.status {
    display: flex;
    align-items: center;
    height: 40px;
    gap: 4px;
    font-size: 15px;
    color: #999;
}

.status strong { font-weight: normal; color: #659c37; }

.tabs-row {
    display: flex;
    align-items: center;
    justify-content: space-between;
    height: 26px;
    padding: 0 10px;
}

.survey-tabs { display: flex; gap: 10px; }

.survey-tabs a {
    height: 26px;
    padding: 0 10px;
    border: 1px solid #c8c8ca;
    border-bottom: none;
    border-radius: 6px 6px 0 0;
    background: #e6e6e9;
    line-height: 28px;
}

.survey-tabs .current {
    position: relative;
    height: 27px;
    border-color: #a2d27c;
    background: linear-gradient(#c6f2aa, #bbe69c);
    font-weight: bold;
}

.preview {
    display: flex;
    align-items: center;
    gap: 4px;
    color: #447fd0;
    font-weight: bold;
}

.report-nav {
    display: flex;
    align-items: center;
    height: 34px;
    gap: 10px;
    padding: 0 10px;
    border: 1px solid #95cb6c;
    border-radius: 5px;
    background: linear-gradient(#bbe69c, #a9d888);
}

.report-nav a {
    padding: 0 8px;
    line-height: 18px;
}

.report-nav .current {
    border-radius: 3px;
    background: #7aac56;
    color: #fff;
    font-weight: bold;
}

h2 {
    padding: 28px 0 10px;
    color: #ff6c0a;
    font-size: 15px;
    font-weight: normal;
    line-height: 20px;
}

.panel {
    display: grid;
    grid-template-columns: 1fr 1fr;
    gap: 19px;
    padding: 10px;
    border: 5px solid #e5e5e7;
    border-radius: 6px;
    background: #efeff1;
}

.question { position: relative; }

.question select {
    display: block;
    width: 100%;
    height: 28px;
    padding: 0 24px 0 11px;
    appearance: none;
    border: 1px solid #8e8e8e;
    border-radius: 3px;
    background: #fff;
    box-shadow: inset 0 2px 3px #ccc;
    color: #111;
    font-family: Verdana, "DejaVu Sans", sans-serif;
    font-size: 13px;
}

/* Arrow drawn on top of the select */
.select-arrow {
    position: absolute;
    top: 6px;
    right: 8px;
    width: 17px;
    height: 16px;
    display: flex;
    align-items: center;
    justify-content: center;
    border: 1px solid #777;
    background: linear-gradient(#fff, #d5d5d5);
    color: #000;
    pointer-events: none;
}

.chart {
    margin-top: 6px;
    border: 1px solid #8e8e8e;
    border-radius: 3px;
    background: #fff;
    overflow: hidden;
}

.chart-text { font-size: 10px; fill: #111; }
.chart-text.end { text-anchor: end; }

.chart-foot {
    display: flex;
    align-items: flex-start;
    justify-content: space-between;
    padding: 4px 4px 0 0;
    color: #777;
    font-family: Verdana, "DejaVu Sans", sans-serif;
    font-size: 10px;
    font-weight: bold;
    line-height: 28px;
}

.chart-types { display: flex; gap: 8px; }

.breakdown h3 {
    padding: 41px 0 12px;
    color: #777;
    font-size: 15px;
    font-weight: normal;
    line-height: 20px;
}

.breakdown ul { list-style: none; }

.breakdown li {
    padding: 5px 0;
    border-top: 1px solid #d4d4d6;
    line-height: 17px;
}

.breakdown b { margin: 0 12px 0 15px; color: #666; }

/* Feedback tabs on the right edge */
.side-tabs {
    position: absolute;
    top: 223px;
    right: 0;
    width: 21px;
    border: 1px solid #fff;
    border-right: none;
    border-radius: 5px 0 0 5px;
    box-shadow: 0 0 4px #999;
    overflow: hidden;
}

.side-tabs button {
    display: flex;
    align-items: center;
    justify-content: center;
    width: 20px;
    font-size: 11px;
    font-weight: bold;
    writing-mode: vertical-rl;
    transform: rotate(180deg);
}

.feedback {
    height: 72px;
    border-top: 1px solid #fff;
    background: linear-gradient(270deg, #92cc63, #7aac56);
    color: #d5ebc3;
}

.bug {
    height: 91px;
    background: linear-gradient(270deg, #3568b3, #275293);
    color: #b4c8e6;
}

.scrollbar {
    width: 17px;
    display: flex;
    flex: none;
    flex-direction: column;
    align-items: center;
    padding: 5px 1px;
    border-left: 1px solid #fff;
    background: #eee;
}

.thumb {
    width: 15px;
    height: 281px;
    margin-top: 5px;
    display: flex;
    flex-direction: column;
    align-items: center;
    justify-content: center;
    gap: 2px;
    border: 1px solid #8f8f8f;
    border-radius: 2px;
    background: linear-gradient(90deg, #f5f5f5, #e2e2e4 50%, #c5c5c8);
}

.thumb i { width: 7px; height: 1px; background: #555; }
.down { margin-top: auto; color: #333; }

/* Find bar */
.find-bar {
    display: flex;
    align-items: center;
    flex: none;
    height: 29px;
    gap: 6px;
    padding: 0 10px;
    border-top: 1px solid #a0a0a0;
    background: #efefef;
}

.find-close { margin-right: 8px; }

.find-bar > input {
    width: 145px;
    height: 20px;
    padding: 0 5px;
    border: none;
    background: #f66;
    color: #fff;
    font: inherit;
}

.find-bar > button,
.match-case,
.find-status {
    display: flex;
    align-items: center;
    gap: 5px;
    white-space: nowrap;
}

.match-case input {
    appearance: none;
    width: 13px;
    height: 13px;
    border: 1px solid #8e8f8f;
    background: linear-gradient(135deg, #cfd3d8, #fafafa);
    box-shadow: inset 0 0 0 1px #f4f4f4;
}

.find-status { margin-left: 12px; }
```
